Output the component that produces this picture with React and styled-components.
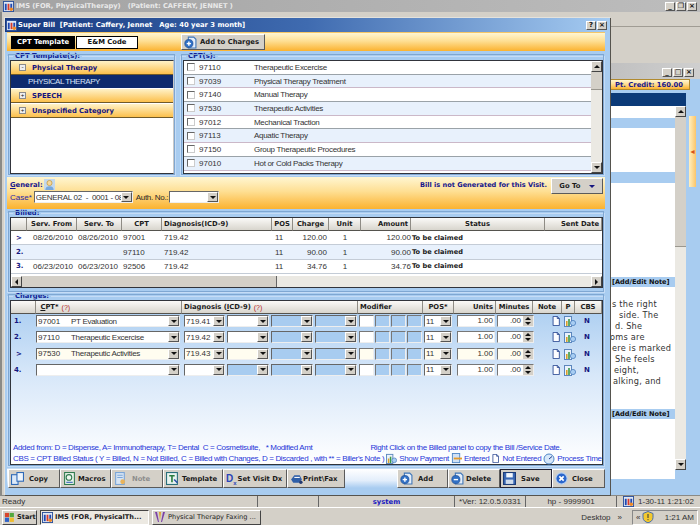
import React from "react";
import styled, { createGlobalStyle } from "styled-components";

const GlobalStyle = createGlobalStyle`
  html, body { margin: 0; padding: 0; background: #d4d0c8; }
  body { font-family: "Liberation Sans", Arial, sans-serif; font-size: 8px; color: #222; }
  * { box-sizing: border-box; }
`;

const BLUE = "#a8ccf0";
const GRAY = "#d4d0c8";
const ORANGE = "linear-gradient(180deg, #fff6d2 0%, #fedf93 45%, #fbb22f 100%)";
const HEAD = '"DejaVu Sans", Verdana, sans-serif';

const Screen = styled.div`
  width: 700px;
  height: 525px;
  display: flex;
  flex-direction: column;
  overflow: hidden;
  background: ${GRAY};
`;

const AppTitle = styled.div`
  height: 12px;
  flex: none;
  display: flex;
  align-items: center;
  gap: 2px;
  padding: 0 3px 0 3px;
  background: linear-gradient(90deg, #a3a3a3, #bdbdbd);
  color: #e9e9e9;
  font: bold 6.7px ${HEAD};
  white-space: pre;
`;

const Spacer = styled.div`
  flex: 1;
`;

const CaptionButtons = styled.div`
  display: flex;
  gap: 1px;
`;

const CaptionButton = styled.div`
  width: ${(p) => p.$w || 10}px;
  height: 9px;
  display: flex;
  align-items: center;
  justify-content: center;
  background: ${GRAY};
  border: 1px solid;
  border-color: #fff #555 #555 #fff;
  color: #111;
  font: bold 7px ${HEAD};
  line-height: 7px;
`;

const Workspace = styled.div`
  position: relative;
  flex: 1;
  border-left: 2px solid #8a8a86;
`;

const BackRule = styled.div`
  margin-top: 14px;
  height: 1px;
  background: #a09c94;
`;

/* windows on the desktop */
const BackWindow = styled.div`
  position: absolute;
  left: 588px;
  top: 51px;
  width: 110px;
  height: 432px;
  background: ${BLUE};
  display: flex;
  flex-direction: column;
`;

const BackTitle = styled.div`
  height: 16px;
  flex: none;
  display: flex;
  align-items: center;
  justify-content: flex-end;
  padding: 2px 6px 0 0;
  background: linear-gradient(90deg, #bdbdbd, #cfcfcf);
`;

const CreditBar = styled.div`
  height: 11px;
  margin: 0 10px 0 0;
  flex: none;
  padding-right: 6px;
  display: flex;
  align-items: center;
  justify-content: flex-end;
  background: ${ORANGE};
  border: 1px solid #b08a30;
  color: #16168c;
  font: bold 6.8px ${HEAD};
`;

const NavyBar = styled.div`
  height: 13px;
  margin: 3px 14px 0 0;
  flex: none;
  background: #0b3a78;
`;

const BackBody = styled.div`
  display: flex;
  height: 364px;
  margin-right: 14px;
  flex: none;
  background: #fff;
`;

const NotesColumn = styled.div`
  flex: 1;
  display: flex;
  flex-direction: column;
  min-width: 0;
`;

const NoteStripe = styled.div`
  height: ${(p) => p.$h}px;
  flex: none;
  padding-left: 22px;
  background: ${(p) => (p.$blue ? BLUE : "#fff")};
  color: #111;
  font: bold 6.6px/10px ${HEAD};
`;

const NoteLine = styled.div`
  height: 11px;
  padding-left: ${(p) => p.$indent}px;
  color: #333;
  font: 8.2px/11px ${HEAD};
  letter-spacing: 0.25px;
  white-space: nowrap;
`;

const Handle = styled.div`
  position: absolute;
  left: 99px;
  top: 53px;
  width: 7px;
  height: 71px;
  background: linear-gradient(90deg, #fff0c0, #fbc56a);
  display: flex;
  align-items: center;
  justify-content: flex-end;
  color: #d9541a;
  font-size: 7px;
`;

const Dialog = styled.div`
  position: absolute;
  left: 2px;
  top: 5px;
  width: 606px;
  height: 478px;
  padding: 0 5px 0 2px;
  display: flex;
  flex-direction: column;
  background: ${BLUE};
  border-top: 1px solid #e4e2dc;
  border-left: 1px solid #e4e2dc;
  box-shadow: 1px 1px 0 #55534e;
`;

const DialogTitle = styled.div`
  height: 14px;
  margin: 0 -5px 0 -2px;
  padding: 0 3px 0 1px;
  flex: none;
  display: flex;
  align-items: center;
  gap: 1px;
  background: linear-gradient(90deg, #17397f 0%, #3f6bb0 50%, #a6ccf2 100%);
  color: #fff;
  font: bold 6.8px ${HEAD};
  white-space: pre;
`;

const Toolbar = styled.div`
  height: 19px;
  padding: 0 0 0 4px;
  flex: none;
  display: flex;
  align-items: center;
  background: ${ORANGE};
  border-top: 1px solid #f5c667;
`;

const Tab = styled.div`
  width: ${(p) => p.$w}px;
  height: 13px;
  display: flex;
  align-items: center;
  justify-content: center;
  background: ${(p) => (p.$active ? "#000" : "#fff")};
  color: ${(p) => (p.$active ? "#fff" : "#111")};
  border: 1px solid #000;
  font: bold 6.8px ${HEAD};
  margin-right: 1px;
`;

const RaisedButton = styled.div`
  height: ${(p) => p.$h || 16}px;
  width: ${(p) => p.$w}px;
  flex: none;
  margin-left: ${(p) => p.$ml || 0}px;
  padding: 0 2px;
  display: flex;
  align-items: center;
  justify-content: ${(p) => p.$justify || "flex-start"};
  gap: ${(p) => p.$gap ?? 3}px;
  background: ${GRAY};
  border: 1px solid;
  border-color: ${(p) => (p.$focus ? "#223" : "#fff #5a5a5a #5a5a5a #fff")};
  color: ${(p) => (p.$disabled ? "#8d8d8d" : "#1a1a1a")};
  font: bold 6.8px ${HEAD};
  white-space: pre;
`;

const TemplateRow = styled.div`
  height: 123px;
  margin-top: 2px;
  flex: none;
  display: grid;
  grid-template-columns: 169px 1fr;
  gap: 4px;
`;

const Group = styled.fieldset`
  margin: ${(p) => p.$mt || 0}px 0 0;
  min-width: 0;
  padding: 0 1px 0 2px;
  height: ${(p) => p.$h || "auto"};
  flex: none;
  border: 1px solid #c5dcf6;
  outline: 1px solid #7fa7d2;
  outline-offset: -2px;
  background: ${BLUE};
`;

const Legend = styled.legend`
  margin-left: 3px;
  padding: 0 2px;
  height: 7px;
  color: #0f1f96;
  font: bold 6.8px/6px ${HEAD};
`;

const ListFrame = styled.div`
  height: 114px;
  background: #fff;
  border: 1px solid;
  border-color: #31343b #c8c8c8 #31343b #31343b;
`;

const TreeHead = styled.div`
  height: 14px;
  margin-bottom: 1px;
  padding-left: 8px;
  display: flex;
  align-items: center;
  gap: 6px;
  background: linear-gradient(180deg, #fff2c8, #fcc04c);
  border-bottom: 1px solid #6f5a2a;
  color: #12127f;
  font: bold 6.8px ${HEAD};
`;

const Expander = styled.span`
  width: 7px;
  height: 7px;
  display: flex;
  align-items: center;
  justify-content: center;
  background: #eee;
  border: 1px solid #8a8a8a;
  color: #111;
  font: 6px/5px "Liberation Mono", monospace;
`;

const TreeLeaf = styled.div`
  height: 13px;
  margin-top: -1px;
  margin-bottom: 1px;
  padding-left: 17px;
  display: flex;
  align-items: center;
  background: #0e2a6e;
  color: #d8e4f8;
  font-size: 8px;
  letter-spacing: -0.45px;
`;

const CptFrame = styled(ListFrame)`
  display: flex;
  border-right: 1px solid #31343b;
`;

const CptRows = styled.div`
  flex: 1;
  min-width: 0;
`;

const CptRow = styled.div`
  height: 13.7px;
  display: grid;
  grid-template-columns: 12px 55px 1fr;
  align-items: center;
  padding-left: 3px;
  background: ${(p) => (p.$alt ? "#e8f1fc" : "#fff")};
  border-bottom: 1px solid ${(p) => (p.$alt ? "#cbb8c8" : "#9aa2a8")};
  color: #333;
  font-size: 8px;
`;

const NarrowText = styled.span`
  letter-spacing: -0.3px;
`;

const Check = styled.span`
  width: 8px;
  height: 8px;
  background: #fff;
  border: 1px solid;
  border-color: #666 #ccc #ccc #666;
`;

const VScroll = styled.div`
  width: 11px;
  flex: none;
  display: flex;
  flex-direction: column;
  background: #ebe9e3;
`;

const ScrollButton = styled.div`
  height: ${(p) => p.$size || 11}px;
  width: ${(p) => p.$size || 11}px;
  flex: none;
  display: flex;
  align-items: center;
  justify-content: center;
  background: ${GRAY};
  border: 1px solid;
  border-color: #fff #444 #444 #fff;
`;

const ScrollThumb = styled.div`
  height: ${(p) => p.$h}px;
  flex: none;
  background: ${GRAY};
  border-bottom: 1px solid #9a978f;
`;

const Triangle = styled.span`
  width: 0;
  height: 0;
  border-style: solid;
  border-color: transparent;
  ${(p) =>
    p.$dir === "up"
      ? "border-width: 0 3px 3px; border-bottom-color: #111;"
      : p.$dir === "left"
      ? "border-width: 3px 3px 3px 0; border-right-color: #111;"
      : p.$dir === "right"
      ? "border-width: 3px 0 3px 3px; border-left-color: #111;"
      : `border-width: 3px 3px 0; border-top-color: ${p.$color || "#111"};`}
`;

const GeneralPanel = styled.div`
  height: 32px;
  margin-top: 1px;
  padding: 2px 2px 0 3px;
  flex: none;
  display: grid;
  grid-template-columns: 1fr auto;
  background: ${ORANGE};
`;

const GeneralLeft = styled.div`
  display: flex;
  flex-direction: column;
  gap: 1px;
`;

const GeneralLabel = styled.div`
  display: flex;
  align-items: center;
  gap: 1px;
  height: 11px;
  color: #16168c;
  font: bold 6.8px ${HEAD};
  white-space: pre;
`;

const CaseRow = styled.div`
  display: flex;
  align-items: center;
  gap: 1px;
  color: #2a2a2a;
  font-size: 8px;
`;

const CaseLabel = styled.span`
  color: #2626b0;
  margin-right: 1px;
`;

const GeneralRight = styled.div`
  display: flex;
  align-items: flex-start;
  gap: 4px;
  margin-top: -1px;
  color: #16168c;
  font: bold 6.6px/15px ${HEAD};
`;

const Combo = styled.div`
  width: ${(p) => p.$w}px;
  height: ${(p) => p.$h || 12}px;
  flex: none;
  margin-left: ${(p) => p.$ml || 0}px;
  display: flex;
  align-items: center;
  padding-left: 1px;
  background: ${(p) => p.$bg || "#fff"};
  border: 1px solid;
  border-color: #666 #eee #eee #666;
  color: #333;
  font-size: 8px;
  white-space: pre;
  overflow: hidden;
`;

const ComboText = styled.span`
  flex: 1;
  min-width: 0;
  overflow: hidden;
`;

const ComboArrow = styled.span`
  width: 11px;
  height: 10px;
  flex: none;
  display: flex;
  align-items: center;
  justify-content: center;
  background: ${GRAY};
  border: 1px solid;
  border-color: #fff #555 #555 #fff;
`;

const GridFrame = styled.div`
  display: flex;
  flex-direction: column;
  background: #fff;
  border: 1px solid #31343b;
  height: ${(p) => p.$h}px;
`;

const BILLED_COLS = "16px 50px 45px 40px 110px 21px 36px 32px 50px 134px 1fr";
const CHARGE_COLS = "25px 146px 176px 65px 31px 42px 37px 29px 13px 1fr";

const HeadRow = styled.div`
  display: grid;
  grid-template-columns: ${(p) => p.$cols};
  height: 13px;
  flex: none;
`;

const HeadCell = styled.div`
  display: flex;
  align-items: center;
  justify-content: ${(p) => p.$align || "center"};
  gap: 3px;
  padding: 0 2px;
  overflow: hidden;
  background: linear-gradient(180deg, #fbfaf8, #d8d5cd);
  border-right: 1px solid #8f8c85;
  border-bottom: 1px solid #55534e;
  color: #1b1b1b;
  font: bold 6.8px ${HEAD};
  white-space: nowrap;
`;

const Hint = styled.span`
  color: #b22424;
  font: 7px "Liberation Sans", sans-serif;
`;

const BilledRow = styled.div`
  display: grid;
  grid-template-columns: ${BILLED_COLS};
  height: 14.4px;
  flex: none;
  align-items: center;
  background: ${(p) => (p.$alt ? "#e8f1fc" : "#fff")};
  border-bottom: 1px solid #c4ccd6;
  color: #333;
  font-size: 8px;
  white-space: nowrap;
`;

const Cell = styled.div`
  padding: 0 ${(p) => p.$pr ?? 1}px 0 ${(p) => p.$pl ?? 1}px;
  text-align: ${(p) => p.$align || "left"};
`;

const RowMark = styled.div`
  padding-left: ${(p) => p.$pl ?? 5}px;
  color: #15157f;
  font: bold 7px ${HEAD};
`;

const ClaimCell = styled.div`
  padding-left: 1px;
  color: #1b1b1b;
  font: bold 6.6px ${HEAD};
`;

const HScroll = styled.div`
  height: 11px;
  margin-top: auto;
  flex: none;
  display: flex;
  align-items: center;
  background: #ebe9e3;
`;

const HThumb = styled.div`
  width: ${(p) => p.$w}px;
  height: 11px;
  background: ${GRAY};
  border-right: 1px solid #666;
`;

const ChargesBody = styled.div`
  height: 165px;
  display: flex;
  flex-direction: column;
  background: linear-gradient(180deg, ${BLUE} 0%, #d7e7f9 45%, #fff 100%);
  border: 1px solid #31343b;
`;

const ChargeRows = styled.div`
  display: flex;
  flex-direction: column;
  gap: 4.3px;
  padding-top: 1px;
`;

const ChargeRow = styled.div`
  display: flex;
  align-items: center;
  height: 12px;
`;

const ChargeMark = styled.div`
  width: 25px;
  flex: none;
  padding-left: ${(p) => (p.$cur ? 5 : 3)}px;
  color: #15157f;
  font: bold 7px ${HEAD};
`;

const CptCode = styled.span`
  display: inline-block;
  width: 33px;
`;

const DxCombos = styled.div`
  display: flex;
  gap: 2px;
  margin: 0 0 0 4px;
`;

const Modifiers = styled.div`
  display: flex;
  gap: 1px;
  margin-left: 2px;
`;

const ModBox = styled.div`
  width: 15px;
  height: 12px;
  background: ${(p) => p.$bg || BLUE};
  border: 1px solid;
  border-color: #777 #eee #eee #777;
`;

const UnitBox = styled.div`
  width: ${(p) => p.$w}px;
  height: 12px;
  flex: none;
  margin-left: ${(p) => p.$ml || 0}px;
  padding-right: ${(p) => p.$pr ?? 1}px;
  text-align: right;
  background: ${(p) => p.$bg || "#fff"};
  border: 1px solid;
  border-color: #777 #eee #eee #777;
  color: #333;
  font-size: 8px;
  line-height: 10px;
`;

const Spin = styled.div`
  position: relative;
  width: 0;
  height: 12px;
`;

const SpinButtons = styled.div`
  position: absolute;
  right: 1px;
  top: 1px;
  width: 10px;
  height: 10px;
  display: flex;
  flex-direction: column;
  justify-content: space-between;
  align-items: center;
  background: ${GRAY};
  padding: 1px 0;
`;

const RowIcons = styled.div`
  display: flex;
  align-items: center;
  margin-left: 17px;
  gap: 3px;
`;

const CbsValue = styled.span`
  margin-left: 8px;
  color: #15157f;
  font: bold 7px ${HEAD};
`;

const Legends = styled.div`
  margin-top: auto;
  padding: 0 1px 0 2px;
  color: #2636d8;
  font-size: 8px;
  letter-spacing: -0.35px;
  line-height: 11px;
`;

const LegendLine = styled.div`
  display: flex;
  align-items: center;
  gap: ${(p) => p.$gap || 0}px;
  height: 11px;
  white-space: pre;
`;

const Indented = styled.span`
  margin-left: ${(p) => p.$ml}px;
`;

const ButtonBar = styled.div`
  height: 20px;
  margin-top: 1px;
  padding-left: 1px;
  flex: none;
  display: flex;
  align-items: center;
  background: linear-gradient(180deg, #ffffff, #e3eefb 60%, ${BLUE} 100%);
  border-top: 1px solid #c8dcf4;
`;

const DxMark = styled.span`
  color: #2a45b8;
  font: bold 10px "Liberation Sans", sans-serif;
`;

const DxSub = styled.sub`
  font-size: 6px;
  line-height: 0;
`;

const StatusBar = styled.div`
  height: 12px;
  flex: none;
  display: grid;
  grid-template-columns: 258px 61px 136px 71px 91px 1fr;
  background: ${GRAY};
  border-top: 1px solid #8a8a86;
  font-size: 8px;
  color: #333;
`;

const StatusCell = styled.div`
  display: flex;
  align-items: center;
  justify-content: ${(p) => p.$justify || "flex-start"};
  gap: 4px;
  padding: 0 2px;
  border-right: 1px solid #666;
  color: ${(p) => p.$color || "inherit"};
  font: ${(p) => (p.$bold ? `bold 6.8px ${HEAD}` : "inherit")};
`;

const StatusEnd = styled(StatusCell)`
  border-right: 0;
`;

const Taskbar = styled.div`
  height: 18px;
  flex: none;
  display: flex;
  align-items: center;
  padding: 1px 2px 0;
  background: ${GRAY};
  border-top: 1px solid #fff;
`;

const TaskButton = styled.div`
  width: ${(p) => p.$w}px;
  height: 15px;
  flex: none;
  margin-right: ${(p) => p.$mr || 0}px;
  padding: 0 1px;
  display: flex;
  align-items: center;
  gap: 2px;
  white-space: nowrap;
  background: ${(p) => (p.$active ? "#ece9e2" : GRAY)};
  border: 1px solid;
  border-color: ${(p) =>
    p.$active ? "#444 #fff #fff #444" : "#fff #444 #444 #fff"};
  color: #1b1b1b;
  font: ${(p) => (p.$bold ? `bold 6.6px ${HEAD}` : `6.6px ${HEAD}`)};
`;

const TrayLabel = styled.div`
  font-size: 8px;
  color: #333;
  margin-right: 7px;
`;

const Tray = styled.div`
  width: 66px;
  height: 15px;
  margin-left: 3px;
  padding: 0 3px;
  display: flex;
  align-items: center;
  gap: 2px;
  border: 1px solid;
  border-color: #888 #fff #fff #888;
  font-size: 8px;
  color: #333;
`;

/* little drawings */
const Ico = ({ size = 12, children }) => (
  <svg width={size} height={size} viewBox="0 0 12 12" style={{ flex: "none" }}>
    {children}
  </svg>
);

const LogoIcon = ({ size = 11 }) => (
  <Ico size={size}>
    <rect x="0.5" y="0.5" width="11" height="11" fill="#dfe8f6" stroke="#2a4f9a" />
    <rect x="2" y="3" width="2" height="7" fill="#1f47b0" />
    <rect x="5" y="3" width="2" height="7" fill="#d63a2c" />
    <rect x="8" y="3" width="2" height="7" fill="#1f47b0" />
    <circle cx="9" cy="9" r="2" fill="#f08a24" />
  </Ico>
);

const SheetPlus = ({ sign = "plus" }) => (
  <Ico size={13}>
    <path d="M4 1h5l2 2v8H4z" fill="#e4eefa" stroke="#3f76b8" />
    <circle cx="4.5" cy="7" r="3.8" fill="#2f6fc4" stroke="#1c4a92" strokeWidth="0.6" />
    {sign === "plus" && <path d="M4.5 5v4" stroke="#fff" strokeWidth="1.3" />}
    <path d="M2.5 7h4" stroke="#fff" strokeWidth="1.3" />
  </Ico>
);

const FloppyIcon = () => (
  <Ico size={13}>
    <rect x="0.5" y="0.5" width="11" height="11" fill="#3a68b4" stroke="#1c3c78" />
    <rect x="3" y="1" width="6" height="4" fill="#f4f7fb" />
    <rect x="2.5" y="7" width="7" height="4" fill="#cfdcec" />
  </Ico>
);

const CloseIcon = () => (
  <Ico size={13}>
    <circle cx="6" cy="6" r="5.2" fill="#2a66cc" stroke="#b9d2f2" />
    <path d="M4 4l4 4M8 4l-4 4" stroke="#fff" strokeWidth="1.5" />
  </Ico>
);

const CopyIcon = () => (
  <Ico size={13}>
    <rect x="0.5" y="2.5" width="6" height="9" fill="#dce9f8" stroke="#2f6ab8" />
    <rect x="5.5" y="0.5" width="6" height="8" fill="#eef5fc" stroke="#2f6ab8" />
  </Ico>
);

const MacroIcon = () => (
  <Ico size={13}>
    <rect x="1.5" y="0.5" width="9" height="11" fill="#eef6ee" stroke="#2f7a4e" />
    <circle cx="5.5" cy="5" r="2.6" fill="none" stroke="#2f7a4e" />
    <path d="M3 9.5h6" stroke="#2f5fb4" />
  </Ico>
);

const NoteIcon = () => (
  <Ico size={13}>
    <rect x="1.5" y="0.5" width="8" height="11" fill="#d6e4f4" stroke="#7ba6d8" />
    <path d="M3 3h5M3 5h5" stroke="#7ba6d8" />
    <circle cx="8" cy="9" r="2.2" fill="#e9b35a" />
  </Ico>
);

const TemplateIcon = () => (
  <Ico size={13}>
    <rect x="0.5" y="0.5" width="10" height="11" fill="#e8f3f0" stroke="#2a6f7c" />
    <path d="M3 3.5h5M5.5 3.5v6" stroke="#2b7d3e" strokeWidth="1.5" />
    <path d="M7.5 7l3 3" stroke="#2a4fa8" strokeWidth="1.4" />
  </Ico>
);

const PrintIcon = () => (
  <Ico size={13}>
    <path d="M1 7l3-4h5l2 4-3 3H3z" fill="#2f5fa8" />
    <path d="M4 5h5" stroke="#fff" />
    <circle cx="10" cy="9.5" r="1.6" fill="#243a70" />
  </Ico>
);

const PageIcon = ({ size = 10 }) => (
  <Ico size={size}>
    <path d="M2.5 0.5h5l2.5 2.5v8.5h-7.5z" fill="#fdfdff" stroke="#1d3d8c" />
    <path d="M7.5 0.5v2.5h2.5" fill="none" stroke="#1d3d8c" />
  </Ico>
);

const ChartIcon = ({ size = 12 }) => (
  <Ico size={size}>
    <rect x="0.5" y="1.5" width="7" height="10" fill="#eaf2fb" stroke="#5c86bd" />
    <rect x="2" y="6" width="1.6" height="5" fill="#d9a02a" />
    <rect x="4.2" y="4" width="1.6" height="7" fill="#3c9a48" />
    <circle cx="9" cy="8" r="2.6" fill="#a8cdf2" stroke="#3f76b8" strokeWidth="0.7" />
  </Ico>
);

const EnteredIcon = () => (
  <Ico size={11}>
    <rect x="1.5" y="0.5" width="8" height="10" fill="#cfe1f6" stroke="#4f86c6" />
    <path d="M3 6h9" stroke="#e39a2c" strokeWidth="2" />
  </Ico>
);

const GaugeIcon = () => (
  <Ico size={12}>
    <circle cx="6" cy="6" r="5" fill="#d6e7f9" stroke="#4f86c6" />
    <path d="M6 6l3-2.5" stroke="#1d3d8c" />
  </Ico>
);

const PersonIcon = () => (
  <Ico size={11}>
    <rect width="12" height="12" fill="#c4d8ee" />
    <circle cx="6" cy="4.4" r="2.8" fill="#f6d79c" stroke="#c49a3a" strokeWidth="0.8" />
    <path d="M1.5 12c0-3 2-4 4.5-4s4.5 1 4.5 4z" fill="#79a8dc" />
  </Ico>
);

const FlagIcon = () => (
  <Ico size={11}>
    <rect x="1" y="1" width="4.6" height="4.6" fill="#d8442c" />
    <rect x="6.2" y="1" width="4.6" height="4.6" fill="#52a83e" />
    <rect x="1" y="6.2" width="4.6" height="4.6" fill="#2f62c8" />
    <rect x="6.2" y="6.2" width="4.6" height="4.6" fill="#f0bc2c" />
  </Ico>
);

const ShieldIcon = () => (
  <Ico size={12}>
    <path d="M6 0.5l5 2v4c0 2.8-2.2 4.4-5 5.3C3.2 10.9 1 9.3 1 6.5v-4z" fill="#f3c92e" stroke="#4a6ea8" />
    <path d="M6 3v4M6 8.2v1" stroke="#333" />
  </Ico>
);

const FaxAppIcon = () => (
  <Ico size={12}>
    <path d="M1 1l3 10h1L3 1zM11 1L8 11H7l2-10z" fill="#7a3fa8" />
    <path d="M5 1l1 8 1-8z" fill="#e0a020" />
  </Ico>
);

const TreeGroups = [
  { name: "Physical Therapy", open: true },
  { name: "SPEECH" },
  { name: "Unspecified Category" },
];

const cptRows = [
  ["97110", "Therapeutic Excercise"],
  ["97039", "Physical Therapy Treatment"],
  ["97140", "Manual Therapy"],
  ["97530", "Therapeutic Activities"],
  ["97012", "Mechanical Traction"],
  ["97113", "Aquatic Therapy"],
  ["97150", "Group Therapeutic Procedures"],
  ["97010", "Hot or Cold Packs Therapy"],
];

const billedHead = [
  ["", "center"],
  ["Serv. From", "center"],
  ["Serv. To", "center"],
  ["CPT", "center"],
  ["Diagnosis(ICD-9)", "flex-start"],
  ["POS", "center"],
  ["Charge", "center"],
  ["Unit", "center"],
  ["Amount", "flex-end"],
  ["Status", "center"],
  ["Sent Date", "flex-end"],
];

const billedRows = [
  { mark: ">", from: "08/26/2010", to: "08/26/2010", cpt: "97001", charge: "120.00" },
  { mark: "2.", from: "", to: "", cpt: "97110", charge: "90.00" },
  { mark: "3.", from: "06/23/2010", to: "06/23/2010", cpt: "92506", charge: "34.76" },
];

const chargeRows = [
  { mark: "1.", code: "97001", name: "PT Evaluation", dx: "719.41" },
  { mark: "2.", code: "97110", name: "Therapeutic Excercise", dx: "719.42" },
  { mark: ">", code: "97530", name: "Therapeutic Activities", dx: "719.43", cur: true },
  { mark: "4.", code: "", name: "", dx: "", last: true },
];

const noteLines = [
  ["s the right", 22],
  ["side. The", 29],
  ["d. She", 25],
  ["oms are", 20],
  ["ere is marked", 22],
  ["She feels", 25],
  ["eight,", 24],
  ["alking, and", 23],
];

const Arrow = () => (
  <ComboArrow>
    <Triangle />
  </ComboArrow>
);

const BackgroundWindow = () => (
  <BackWindow>
    <BackTitle>
      <CaptionButtons>
        <CaptionButton>_</CaptionButton>
        <CaptionButton>□</CaptionButton>
        <CaptionButton>×</CaptionButton>
      </CaptionButtons>
    </BackTitle>
    <CreditBar>Pt. Credit: 160.00</CreditBar>
    <NavyBar />
    <BackBody>
      <NotesColumn>
        <NoteStripe $h={12} />
        <NoteStripe $h={10} $blue />
        <NoteStripe $h={44} />
        <NoteStripe $h={11} $blue />
        <NoteStripe $h={94} />
        <NoteStripe $h={10} $blue>[Add/Edit Note]</NoteStripe>
        <NoteStripe $h={12} />
        {noteLines.map(([text, indent]) => (
          <NoteLine key={text} $indent={indent}>{text}</NoteLine>
        ))}
        <NoteStripe $h={22} />
        <NoteStripe $h={10} $blue>[Add/Edit Note]</NoteStripe>
        <NoteStripe $h={60} />
      </NotesColumn>
      <VScroll>
        <ScrollButton><Triangle $dir="up" /></ScrollButton>
        <ScrollThumb $h={130} />
        <Spacer />
        <ScrollButton><Triangle /></ScrollButton>
      </VScroll>
    </BackBody>
    <Handle>◄</Handle>
  </BackWindow>
);

const TemplatePanels = () => (
  <TemplateRow>
    <Group>
      <Legend>CPT Template(s):</Legend>
      <ListFrame>
        {TreeGroups.map((g) => (
          <React.Fragment key={g.name}>
            <TreeHead>
              <Expander>{g.open ? "-" : "+"}</Expander>
              {g.name}
            </TreeHead>
            {g.open && <TreeLeaf>PHYSICAL THERAPY</TreeLeaf>}
          </React.Fragment>
        ))}
      </ListFrame>
    </Group>
    <Group>
      <Legend>CPT(s):</Legend>
      <CptFrame>
        <CptRows>
          {cptRows.map(([code, name], i) => (
            <CptRow key={code} $alt={i % 2 === 1}>
              <Check />
              <span>{code}</span>
              <NarrowText>{name}</NarrowText>
            </CptRow>
          ))}
        </CptRows>
        <VScroll>
          <ScrollButton><Triangle $dir="up" /></ScrollButton>
          <ScrollThumb $h={18} />
          <Spacer />
          <ScrollButton><Triangle /></ScrollButton>
        </VScroll>
      </CptFrame>
    </Group>
  </TemplateRow>
);

const General = () => (
  <GeneralPanel>
    <GeneralLeft>
      <GeneralLabel>
        <span><u>G</u>eneral:</span> <PersonIcon />
      </GeneralLabel>
      <CaseRow>
        <CaseLabel>Case*</CaseLabel>
        <Combo $w={99}>
          <ComboText><NarrowText>GENERAL 02  -  0001 - 08</NarrowText></ComboText>
          <Arrow />
        </Combo>
        <NarrowText>&nbsp;Auth. No.:</NarrowText>
        <Combo $w={50}>
          <ComboText />
          <Arrow />
        </Combo>
      </CaseRow>
    </GeneralLeft>
    <GeneralRight>
      <span>Bill is not Generated for this Visit.</span>
      <RaisedButton $w={52} $justify="center" $gap={6}>
        Go To <Triangle $color="#15157f" />
      </RaisedButton>
    </GeneralRight>
  </GeneralPanel>
);

const HScrollBar = () => (
  <HScroll>
    <ScrollButton><Triangle $dir="left" /></ScrollButton>
    <HThumb $w={255} />
    <Spacer />
    <ScrollButton><Triangle $dir="right" /></ScrollButton>
  </HScroll>
);

const Billed = () => (
  <Group $h="83px" $mt={1}>
    <Legend>Billed:</Legend>
    <GridFrame $h={71}>
      <HeadRow $cols={BILLED_COLS}>
        {billedHead.map(([title, align], i) => (
          <HeadCell key={i} $align={align}>{title}</HeadCell>
        ))}
      </HeadRow>
      {billedRows.map((r, i) => (
        <BilledRow key={r.cpt} $alt={i === 1}>
          <RowMark>{r.mark}</RowMark>
          <Cell $pl={6}>{r.from}</Cell>
          <Cell>{r.to}</Cell>
          <Cell>{r.cpt}</Cell>
          <Cell $pl={2}>719.42</Cell>
          <Cell $pl={3}>11</Cell>
          <Cell $align="right" $pr={2}>{r.charge}</Cell>
          <Cell $align="center">1</Cell>
          <Cell $align="right" $pr={0}>{r.charge}</Cell>
          <ClaimCell>To be claimed</ClaimCell>
          <span />
        </BilledRow>
      ))}
      <HScrollBar />
    </GridFrame>
  </Group>
);

const ChargeLine = ({ row }) => {
  const bg = row.cur ? "#fffdf0" : "#fff";
  return (
    <ChargeRow>
      <ChargeMark $cur={row.cur}>{row.mark}</ChargeMark>
      <Combo $w={144} $bg={bg}>
        <ComboText>
          <CptCode>{row.code}</CptCode>
          <NarrowText>{row.name}</NarrowText>
        </ComboText>
        <Arrow />
      </Combo>
      <DxCombos>
        <Combo $w={41} $bg={bg}><ComboText>{row.dx}</ComboText><Arrow /></Combo>
        <Combo $w={42} $bg={row.last ? BLUE : bg}><ComboText /><Arrow /></Combo>
        <Combo $w={42} $bg={BLUE}><ComboText /><Arrow /></Combo>
        <Combo $w={42} $bg={BLUE}><ComboText /><Arrow /></Combo>
      </DxCombos>
      <Modifiers>
        <ModBox $bg={bg} />
        <ModBox />
        <ModBox />
        <ModBox />
      </Modifiers>
      <Combo $w={28} $ml={2} $bg={bg}><ComboText>11</ComboText><Arrow /></Combo>
      <UnitBox $w={38} $ml={5} $bg={bg}>1.00</UnitBox>
      <UnitBox $w={37} $ml={2} $pr={12} $bg={bg}>.00</UnitBox>
      <Spin>
        <SpinButtons>
          <Triangle $dir="up" />
          <Triangle />
        </SpinButtons>
      </Spin>
      <RowIcons>
        <PageIcon />
        <ChartIcon />
      </RowIcons>
      <CbsValue>N</CbsValue>
    </ChargeRow>
  );
};

const Charges = () => (
  <Group $h="174px">
    <Legend>Charges:</Legend>
    <ChargesBody>
      <HeadRow $cols={CHARGE_COLS}>
        <HeadCell />
        <HeadCell $align="flex-start"><span>&nbsp;<u>C</u>PT*</span> <Hint>(?)</Hint></HeadCell>
        <HeadCell $align="flex-start"><span>Diagnosis (<u>I</u>CD-9)</span> <Hint>(?)</Hint></HeadCell>
        <HeadCell $align="flex-start">Modifier</HeadCell>
        <HeadCell>POS*</HeadCell>
        <HeadCell $align="flex-end">Units</HeadCell>
        <HeadCell>Minutes</HeadCell>
        <HeadCell>Note</HeadCell>
        <HeadCell>P</HeadCell>
        <HeadCell>CBS</HeadCell>
      </HeadRow>
      <ChargeRows>
        {chargeRows.map((r) => (
          <ChargeLine key={r.mark} row={r} />
        ))}
      </ChargeRows>
      <Legends>
        <LegendLine>
          Added from: D = Dispense, A= Immunotherapy, T= Dental  C = Cosmetisuite,   * Modified Amt
          <Indented $ml={58}>Right Click on the Billed panel to copy the Bill /Service Date.</Indented>
        </LegendLine>
        <LegendLine $gap={2}>
          CBS = CPT Billed Status ( Y = Billed, N = Not Billed, C = Billed with Changes, D = Discarded , with ** = Biller's Note )
          <ChartIcon size={11} />
          <span>Show Payment</span>
          <EnteredIcon />
          <span>Entered</span>
          <PageIcon size={9} />
          <span>Not Entered</span>
          <GaugeIcon />
          <span>Process Time</span>
        </LegendLine>
      </Legends>
    </ChargesBody>
  </Group>
);

const Actions = () => (
  <ButtonBar>
    <RaisedButton $w={52} $h={19} $gap={5}><CopyIcon />Copy</RaisedButton>
    <RaisedButton $w={51} $h={19} $gap={2}><MacroIcon />Macros</RaisedButton>
    <RaisedButton $w={52} $h={19} $gap={5} $disabled><NoteIcon />Note</RaisedButton>
    <RaisedButton $w={60} $h={19} $gap={3}><TemplateIcon />Template</RaisedButton>
    <RaisedButton $w={64} $h={19} $gap={1}><DxMark>D<DxSub>x</DxSub></DxMark>Set Visit Dx</RaisedButton>
    <RaisedButton $w={58} $h={19} $gap={0}><PrintIcon />Print\Fax</RaisedButton>
    <Spacer />
    <RaisedButton $w={51} $h={19} $gap={5}><SheetPlus />Add</RaisedButton>
    <RaisedButton $w={52} $h={19} $gap={2}><SheetPlus sign="minus" />Delete</RaisedButton>
    <RaisedButton $w={52} $h={19} $gap={5} $focus><FloppyIcon />Save</RaisedButton>
    <RaisedButton $w={53} $h={19} $gap={4}><CloseIcon />Close</RaisedButton>
  </ButtonBar>
);

export default function App() {
  return (
    <>
      <GlobalStyle />
      <Screen>
        <AppTitle>
          <LogoIcon />
          IMS (FOR, PhysicalTherapy)   (Patient: CAFFERY, JENNET )
          <Spacer />
          <CaptionButtons>
            <CaptionButton>_</CaptionButton>
            <CaptionButton>❐</CaptionButton>
            <CaptionButton>×</CaptionButton>
          </CaptionButtons>
        </AppTitle>
        <Workspace>
          <BackRule />
          <BackgroundWindow />
          <Dialog>
            <DialogTitle>
              <LogoIcon />
              Super Bill  [Patient: Caffery, Jennet   Age: 40 year 3 month]
              <Spacer />
              <CaptionButtons>
                <CaptionButton>?</CaptionButton>
                <CaptionButton>×</CaptionButton>
              </CaptionButtons>
            </DialogTitle>
            <Toolbar>
              <Tab $w={64} $active>CPT Template</Tab>
              <Tab $w={62}>E&amp;M Code</Tab>
              <RaisedButton $w={84} $ml={42}>
                <SheetPlus />
                Add to Charges
              </RaisedButton>
            </Toolbar>
            <TemplatePanels />
            <General />
            <Billed />
            <Charges />
            <Actions />
          </Dialog>
        </Workspace>
        <StatusBar>
          <StatusCell>Ready</StatusCell>
          <StatusCell />
          <StatusCell $justify="center" $color="#1a1ac0" $bold>system</StatusCell>
          <StatusCell $justify="center">*Ver: 12.0.5.0331</StatusCell>
          <StatusCell $justify="center">hp - 9999901</StatusCell>
          <StatusEnd $justify="center"><LogoIcon />1-30-11 1:21:02</StatusEnd>
        </StatusBar>
        <Taskbar>
          <TaskButton $w={35} $mr={3} $bold><FlagIcon />Start</TaskButton>
          <TaskButton $w={109} $mr={3} $bold $active><LogoIcon />IMS (FOR, PhysicalTh...</TaskButton>
          <TaskButton $w={109}><FaxAppIcon />Physical Therapy Faxing ...</TaskButton>
          <Spacer />
          <TrayLabel>Desktop</TrayLabel>
          <TrayLabel>»</TrayLabel>
          <Tray>
            «<ShieldIcon />
            <Spacer />
            1:21 AM
          </Tray>
        </Taskbar>
      </Screen>
    </>
  );
}
